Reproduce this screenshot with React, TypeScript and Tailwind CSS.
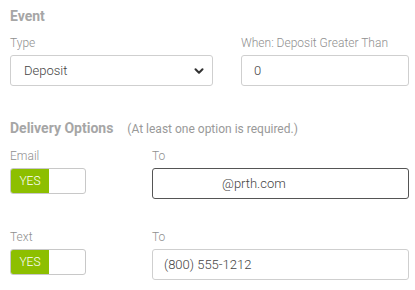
import { ChevronDown } from "lucide-react";

function Toggle() {
  return (
    <div className="flex h-[26px] w-[76px] overflow-hidden rounded-[3px] border border-[#c8c8c8] bg-white">
      <div className="flex w-[38px] items-center justify-center bg-[#8dbf00] text-[12px] font-light text-white">YES</div>
    </div>
  );
}

export default function App() {
  return (
    <div className="h-[290px] w-[415px] bg-white pl-[10px] pt-[7px] font-['Roboto',sans-serif] text-[#555]">
      <h2 className="text-[14px] font-bold leading-[18px] text-[#a6a6a6]">Event</h2>
      <div className="mt-[10px] grid grid-cols-[203px_168px] gap-x-[28px]">
        <label className="text-[12px] font-light leading-[16px] text-[#8f8f8f]">Type</label>
        <label className="text-[12px] font-light leading-[16px] text-[#8f8f8f]">When: Deposit Greater Than</label>
        <div className="mt-[4px] flex h-[31px] items-center justify-between rounded-[3px] border border-[#cfcfcf] pl-[13px] pr-[6px] text-[13px] font-light text-[#444]">
          <span>Deposit</span>
          <ChevronDown size={14} strokeWidth={3.5} className="text-[#333]" />
        </div>
        <div className="mt-[4px] flex h-[31px] items-center rounded-[3px] border border-[#cfcfcf] pl-[12px] text-[13px] font-light text-[#444]">
          0
        </div>
      </div>

      <div className="mt-[33px] flex items-baseline">
        <h2 className="text-[14px] font-bold leading-[18px] text-[#a6a6a6]">Delivery Options</h2>
        <span className="ml-[14px] text-[12px] text-[#999]">(At least one option is required.)</span>
      </div>

      <div className="mt-[10px] grid grid-cols-[142px_257px]">
        <label className="text-[12px] font-light leading-[16px] text-[#8f8f8f]">Email</label>
        <label className="text-[12px] font-light leading-[16px] text-[#8f8f8f]">To</label>
        <div className="mt-[4px]">
          <Toggle />
        </div>
        <div className="mt-[4px] flex h-[31px] items-center rounded-[3px] border border-[#555] pl-[69px] text-[13px] font-light text-[#444]">
          @prth.com
        </div>
      </div>

      <div className="mt-[30px] grid grid-cols-[142px_257px]">
        <label className="text-[12px] font-light leading-[16px] text-[#8f8f8f]">Text</label>
        <label className="text-[12px] font-light leading-[16px] text-[#8f8f8f]">To</label>
        <div className="mt-[4px]">
          <Toggle />
        </div>
        <div className="mt-[4px] flex h-[31px] items-center rounded-[3px] border border-[#cfcfcf] pl-[11px] text-[13px] font-light text-[#444]">
          (800) 555-1212
        </div>
      </div>
    </div>
  );
}
